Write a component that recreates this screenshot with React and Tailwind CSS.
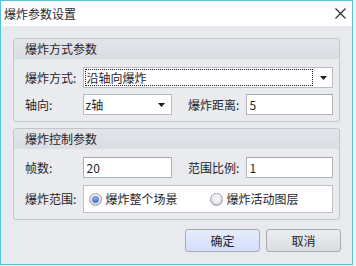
import { useState } from "react";

const font = { fontFamily: '"Noto Sans CJK SC", "Noto Sans", sans-serif' };

function Arrow() {
  return (
    <svg width="7" height="4" viewBox="0 0 7 4" className="shrink-0">
      <path d="M0 0h7L3.5 4z" fill="#1b1b1b" />
    </svg>
  );
}

function Group({ title, children }) {
  return (
    <div className="border border-[#c3c5cc] rounded-[3px] bg-[#eaebef]">
      <div className="h-[20px] flex items-center pl-[11px] bg-gradient-to-b from-[#e4e5ea] to-[#dcdde2] rounded-t-[3px] text-[12px] text-[#1e1e2c]">
        {title}
      </div>
      <div className="pl-[11px] pr-[6px] pt-[8px] pb-[6px] flex flex-col gap-[6px]">
        {children}
      </div>
    </div>
  );
}

function Radio({ checked, label, onClick }) {
  return (
    <button onClick={onClick} className="flex items-center gap-[4px] text-[12px] text-[#1e1e2c]">
      <span className="w-[13px] h-[13px] rounded-full border border-[#9c9ea6] bg-gradient-to-b from-[#f4f4f6] to-[#cfd0d6] flex items-center justify-center">
        {checked && (
          <span className="w-[7px] h-[7px] rounded-full bg-gradient-to-b from-[#9ab8f0] to-[#3b6fd8] border border-[#4a72c4]" />
        )}
        {!checked && <span className="w-[7px] h-[7px] rounded-full bg-[#f2f2f4]" />}
      </span>
      {label}
    </button>
  );
}

export default function App() {
  const [scope, setScope] = useState("scene");

  return (
    <div className="w-[356px] h-[266px] bg-[#f3f3f3]" style={font}>
      <div className="w-[353px] h-[265px] border border-[#5cc1d2] flex flex-col bg-[#e9eaee]">
        <div className="h-[25px] bg-white flex items-center justify-between pl-[3px] pr-[6px]">
          <span className="text-[12px] text-[#2a2a2a]">爆炸参数设置</span>
          <svg width="11" height="11" viewBox="0 0 11 11">
            <path d="M0.5 0.5L10.5 10.5M10.5 0.5L0.5 10.5" stroke="#2a2a2a" strokeWidth="1.1" />
          </svg>
        </div>

        <div className="px-[12px] pt-[12px] flex flex-col gap-[6px] text-[12px] text-[#1e1e2c]">
          <Group title="爆炸方式参数">
            <div className="flex items-center">
              <span className="w-[58px]">爆炸方式:</span>
              <div className="w-[252px] h-[21px] bg-white border border-[#b9bbc2] flex items-center pl-[1px] pr-[5px]">
                <div className="flex-1 h-[17px] border border-dotted border-[#202020] flex items-center pl-[1px] leading-none">
                  沿轴向爆炸
                </div>
                <span className="pl-[7px]">
                  <Arrow />
                </span>
              </div>
            </div>
            <div className="flex items-center">
              <span className="w-[58px]">轴向:</span>
              <div className="w-[90px] h-[21px] bg-white border border-[#b9bbc2] flex items-center justify-between pl-[2px] pr-[6px]">
                <span>z轴</span>
                <Arrow />
              </div>
              <span className="ml-[16px] w-[58px]">爆炸距离:</span>
              <div className="w-[88px] h-[21px] bg-white border border-[#b0b2ba] border-t-[#a4a6ae] flex items-center pl-[3px]">
                5
              </div>
            </div>
          </Group>

          <Group title="爆炸控制参数">
            <div className="flex items-center">
              <span className="w-[58px]">帧数:</span>
              <div className="w-[90px] h-[21px] bg-white border border-[#b0b2ba] border-t-[#a4a6ae] flex items-center pl-[3px]">
                20
              </div>
              <span className="ml-[16px] w-[58px]">范围比例:</span>
              <div className="w-[88px] h-[21px] bg-white border border-[#b0b2ba] border-t-[#a4a6ae] flex items-center pl-[3px]">
                1
              </div>
            </div>
            <div className="flex items-center mt-[1px]">
              <span className="w-[58px]">爆炸范围:</span>
              <div className="w-[252px] h-[28px] bg-white border border-[#c0c2c8] flex items-center pl-[5px]">
                <div className="w-[121px]">
                  <Radio checked={scope === "scene"} label="爆炸整个场景" onClick={() => setScope("scene")} />
                </div>
                <Radio checked={scope === "layer"} label="爆炸活动图层" onClick={() => setScope("layer")} />
              </div>
            </div>
          </Group>

          <div className="flex justify-end gap-[6px] pt-[3px] pr-[-1px] mr-[-1px]">
            <button className="w-[75px] h-[23px] rounded-[3px] border border-[#a9abb3] bg-gradient-to-b from-[#e6ecfb] to-[#d3defa] text-[12px] text-[#1e1e2c]">
              确定
            </button>
            <button className="w-[75px] h-[23px] rounded-[3px] border border-[#a9abb3] bg-gradient-to-b from-[#ecedf0] to-[#dcdde2] text-[12px] text-[#1e1e2c]">
              取消
            </button>
          </div>
        </div>
      </div>
    </div>
  );
}
